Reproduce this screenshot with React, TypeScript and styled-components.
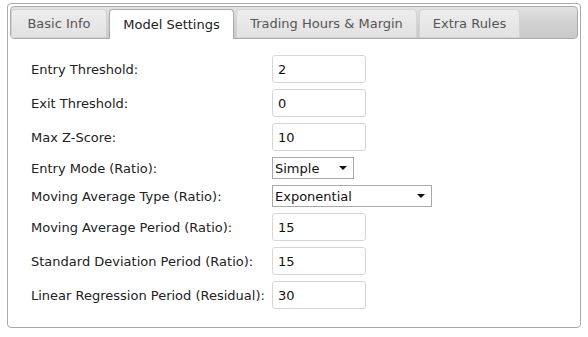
import { createGlobalStyle } from 'styled-components'
import styled from 'styled-components'

const GlobalStyle = createGlobalStyle`
    html, body {
        margin: 0;
        padding: 0;
        background: #fff;
    }
    body {
        font-family: "DejaVu Sans", Verdana, sans-serif;
        font-size: 13px;
        color: #222;
    }
`

const Page = styled.div`
    padding: 3px 7px 0 7px;
`

const TabsBox = styled.div`
    width: 568px;
    height: 319px;
    border: 1px solid #aaa;
    border-radius: 4px;
    padding: 2px;
    background: #fff;
    display: flex;
    flex-direction: column;
`

const TabNav = styled.ul`
    list-style: none;
    margin: 0;
    padding: 2px 0 0 0;
    height: 29px;
    display: flex;
    align-items: flex-end;
    gap: 2px;
    border: 1px solid #aaa;
    border-radius: 4px;
    background: linear-gradient(#e3e3e3 0%, #d2d2d2 45%, #c9c9c9 100%);
`

const Tab = styled.li<{ $active?: boolean; $width: number }>`
    width: ${(p) => p.$width}px;
    height: ${(p) => (p.$active ? '30px' : '29px')};
    margin-bottom: ${(p) => (p.$active ? '-1px' : '0')};
    box-sizing: border-box;
    display: flex;
    align-items: center;
    justify-content: center;
    border: 1px solid ${(p) => (p.$active ? '#aaa' : '#d3d3d3')};
    border-bottom: ${(p) => (p.$active ? 'none' : '1px solid #d3d3d3')};
    border-radius: 4px 4px 0 0;
    background: ${(p) => (p.$active ? '#fff' : 'linear-gradient(#ededed, #e2e2e2)')};
    color: ${(p) => (p.$active ? '#212121' : '#555')};
    white-space: nowrap;
    cursor: pointer;
`

const Panel = styled.div`
    padding: 16px 0 0 21px;
`

const Form = styled.div`
    display: grid;
    grid-template-columns: 241px auto;
    row-gap: 6px;
    align-items: center;
`

const Label = styled.label`
    white-space: nowrap;
    color: #222;
`

const TextInput = styled.input`
    width: 94px;
    height: 28px;
    box-sizing: border-box;
    border: 1px solid #d6d6d6;
    border-radius: 3px;
    padding: 0 5px;
    font: inherit;
    color: #111;
    outline: none;
`

const SelectWrap = styled.div<{ $width: number }>`
    position: relative;
    width: ${(p) => p.$width}px;
    height: 22px;

    &::after {
        content: '';
        position: absolute;
        right: 7px;
        top: 9px;
        border-left: 4px solid transparent;
        border-right: 4px solid transparent;
        border-top: 4px solid #111;
        pointer-events: none;
    }
`

const Select = styled.select`
    appearance: none;
    width: 100%;
    height: 100%;
    box-sizing: border-box;
    border: 1px solid #a9a9a9;
    border-radius: 0;
    background: #fff;
    padding: 0 0 0 2px;
    font: inherit;
    color: #111;
    outline: none;
`

const tabs = [
    { name: 'Basic Info', width: 96 },
    { name: 'Model Settings', width: 125 },
    { name: 'Trading Hours & Margin', width: 181 },
    { name: 'Extra Rules', width: 101 },
]

type Field =
    | { label: string; kind: 'input'; value: string }
    | { label: string; kind: 'select'; value: string; options: string[]; width: number }

const fields: Field[] = [
    { label: 'Entry Threshold:', kind: 'input', value: '2' },
    { label: 'Exit Threshold:', kind: 'input', value: '0' },
    { label: 'Max Z-Score:', kind: 'input', value: '10' },
    { label: 'Entry Mode (Ratio):', kind: 'select', value: 'Simple', options: ['Simple', 'Log'], width: 82 },
    {
        label: 'Moving Average Type (Ratio):',
        kind: 'select',
        value: 'Exponential',
        options: ['Simple', 'Exponential', 'Weighted'],
        width: 160,
    },
    { label: 'Moving Average Period (Ratio):', kind: 'input', value: '15' },
    { label: 'Standard Deviation Period (Ratio):', kind: 'input', value: '15' },
    { label: 'Linear Regression Period (Residual):', kind: 'input', value: '30' },
]

const App = () => {
    return (
        <Page>
            <GlobalStyle />
            <TabsBox>
                <TabNav>
                    {tabs.map((t) => (
                        <Tab key={t.name} $width={t.width} $active={t.name === 'Model Settings'}>
                            {t.name}
                        </Tab>
                    ))}
                </TabNav>
                <Panel>
                    <Form>
                        {fields.map((f) => [
                            <Label key={f.label + '-l'}>{f.label}</Label>,
                            f.kind === 'input' ? (
                                <TextInput key={f.label + '-i'} defaultValue={f.value} />
                            ) : (
                                <SelectWrap key={f.label + '-s'} $width={f.width}>
                                    <Select defaultValue={f.value}>
                                        {f.options.map((o) => (
                                            <option key={o}>{o}</option>
                                        ))}
                                    </Select>
                                </SelectWrap>
                            ),
                        ])}
                    </Form>
                </Panel>
            </TabsBox>
        </Page>
    )
}

export default App
